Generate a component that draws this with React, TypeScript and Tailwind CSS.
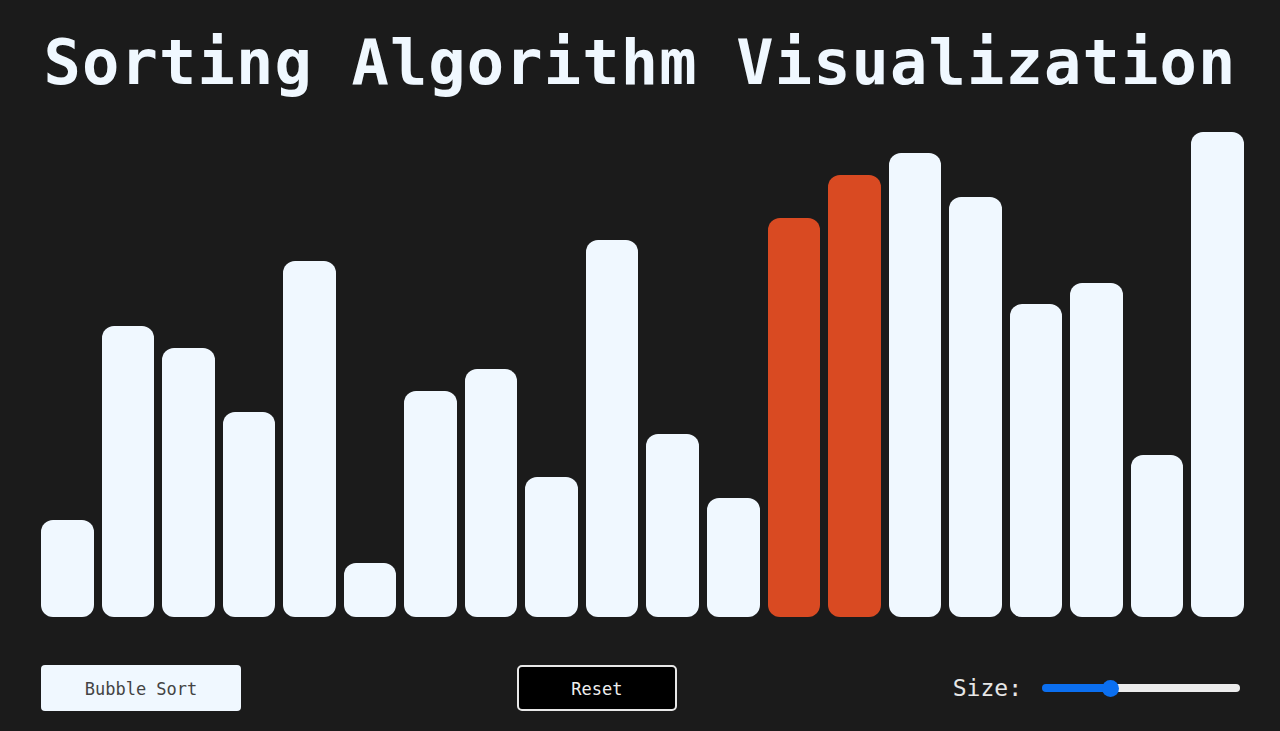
import React from "react";

const heights = [97, 291, 269, 205, 356, 54, 226, 248, 140, 377, 183, 119, 399, 442, 464, 420, 313, 334, 162, 485];
const active = [12, 13];

const App = () => {
  const size = 20;
  const pct = ((size - 5) / (50 - 5)) * 100;
  return (
    <div className="w-full h-[731px] bg-[#1b1b1b] flex flex-col font-['DejaVu_Sans_Mono',monospace] overflow-hidden">
      <h1 className="mt-[32px] text-center text-[62px] leading-[62px] font-bold text-[#f0f8ff] tracking-[1.15px]">
        Sorting Algorithm Visualization
      </h1>

      <div className="mt-[38px] h-[485px] flex items-end gap-2 pl-[41px] pr-[36px]">
        {heights.map((h, i) => (
          <div
            key={i}
            className={`flex-1 rounded-[12px] ${active.includes(i) ? "bg-[#d94a22]" : "bg-[#f0f8ff]"}`}
            style={{ height: h }}
          />
        ))}
      </div>

      <div className="mt-[48px] flex items-center justify-between pl-[41px] pr-[40px]">
        <button className="w-[200px] h-[46px] pt-[3px] bg-[#f0f8ff] rounded-[4px] text-[#444] text-[17px]">
          Bubble Sort
        </button>
        <button className="w-[160px] h-[46px] pt-[3px] bg-black border-2 border-[#e8e8e8] rounded-[5px] text-[#eee] text-[17px]">
          Reset
        </button>
        <div className="flex items-center gap-5">
          <span className="text-[23px] text-[#e6e6e6]">Size:</span>
          <input
            type="range"
            min={5}
            max={50}
            defaultValue={size}
            className="w-[198px] h-2 rounded-full appearance-none outline-none [&::-webkit-slider-thumb]:appearance-none [&::-webkit-slider-thumb]:w-[17px] [&::-webkit-slider-thumb]:h-[17px] [&::-webkit-slider-thumb]:rounded-full [&::-webkit-slider-thumb]:bg-[#0b6ff0]"
            style={{ background: `linear-gradient(to right, #0b6ff0 ${pct}%, #ececec ${pct}%)` }}
          />
        </div>
      </div>
    </div>
  );
};

export default App;
